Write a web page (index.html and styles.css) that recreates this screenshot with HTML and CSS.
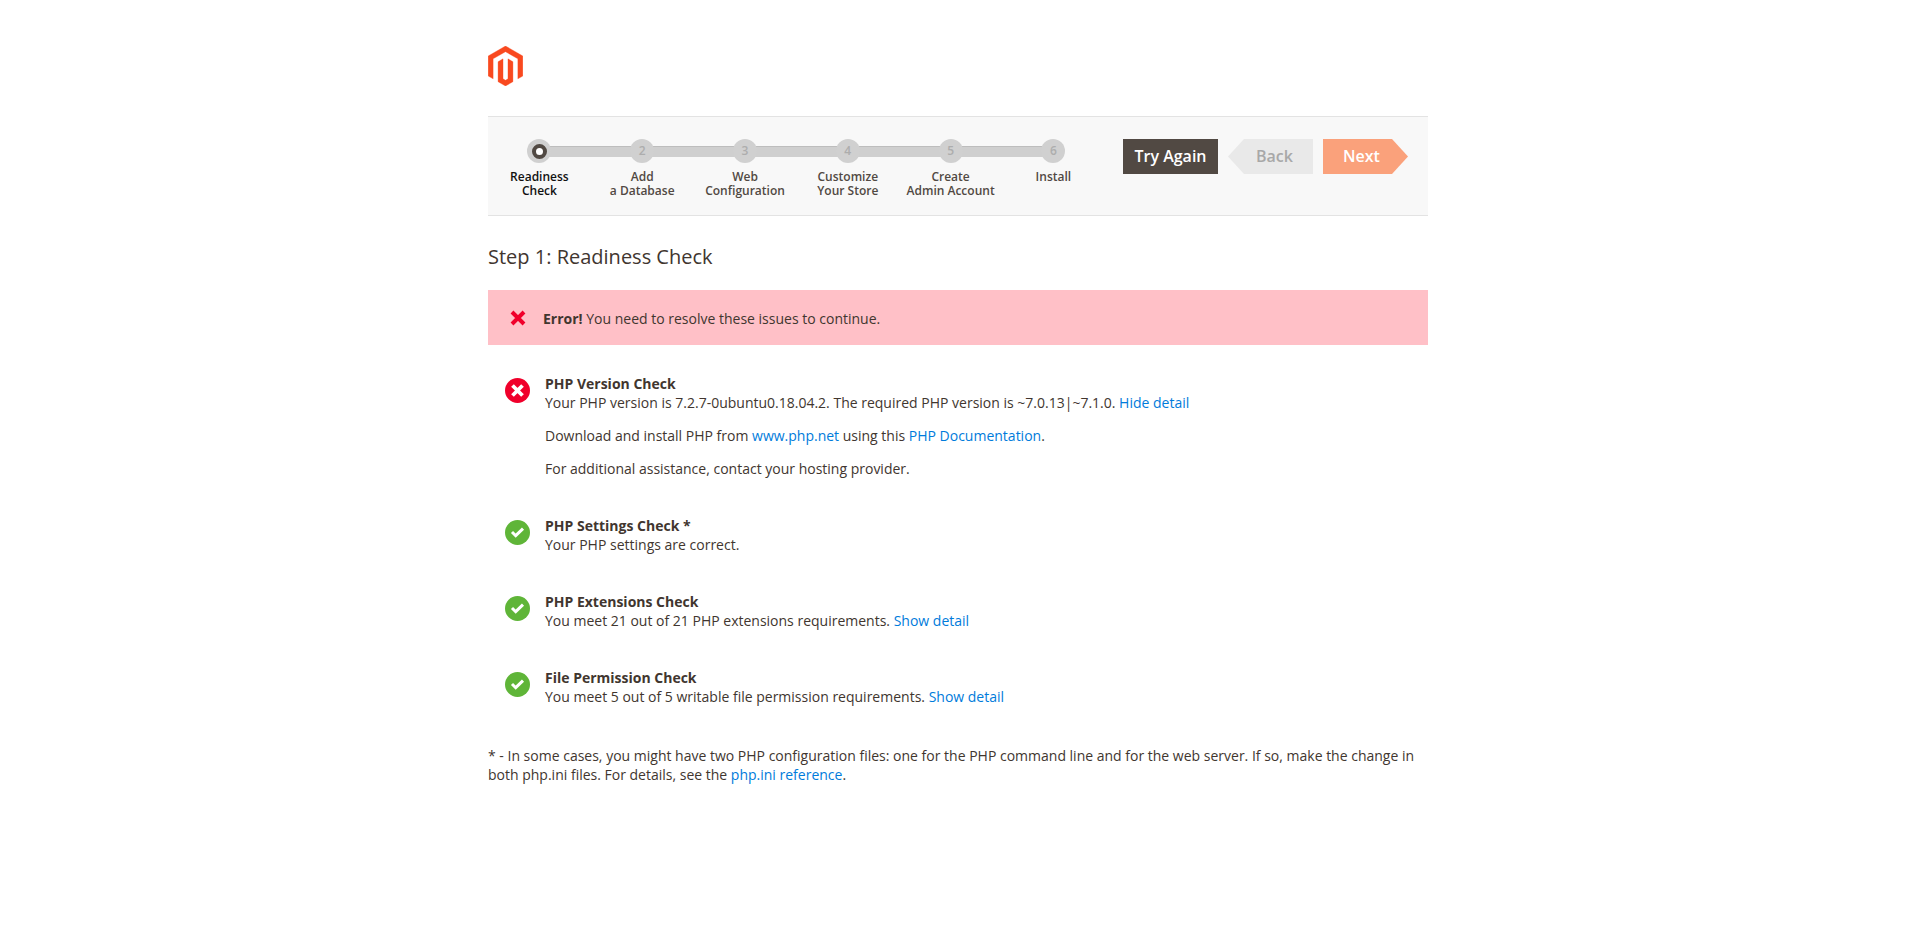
FILE: index.html
```html
<!DOCTYPE html>
<html lang="en">
<head>
<meta charset="utf-8">
<title>Magento Setup</title>
<link rel="stylesheet" href="styles.css">
</head>
<body>
<div class="page">
  <header class="logo-bar">
    <svg class="logo" viewBox="1.609 0 20.782 24" width="35" height="40" aria-label="Magento">
      <path fill="#f9491f" stroke="#f9491f" stroke-width=".2" d="M12 24l-4.455-2.572v-12l2.97-1.715v12.001L12 20.573l1.485-.859V7.713l2.97 1.715v12L12 24zM22.391 6v12l-2.969 1.714V7.713L12 3.43 4.574 7.713v12.001L1.609 18V6L12 0l10.391 6z"/>
    </svg>
  </header>

  <nav class="wizard">
    <ol class="steps">
      <li class="step active"><span class="dot"><span class="ring"></span></span><span class="label">Readiness<br>Check</span></li>
      <li class="step"><span class="dot">2</span><span class="label">Add<br>a Database</span></li>
      <li class="step"><span class="dot">3</span><span class="label">Web<br>Configuration</span></li>
      <li class="step"><span class="dot">4</span><span class="label">Customize<br>Your Store</span></li>
      <li class="step"><span class="dot">5</span><span class="label">Create<br>Admin Account</span></li>
      <li class="step"><span class="dot">6</span><span class="label">Install</span></li>
    </ol>
    <div class="actions">
      <button class="btn btn-dark" type="button">Try Again</button>
      <button class="btn btn-back" type="button">Back</button>
      <button class="btn btn-next" type="button">Next</button>
    </div>
  </nav>

  <h1 class="title">Step 1: Readiness Check</h1>

  <div class="alert">
    <svg class="alert-x" viewBox="0 0 16 16" width="16" height="16"><path fill="none" stroke="#f0002b" stroke-width="4" d="M2 2 14 14M14 2 2 14"/></svg>
    <p><strong>Error!</strong> You need to resolve these issues to continue.</p>
  </div>

  <section class="check first">
    <svg class="status" viewBox="0 0 25 25" width="25" height="25"><circle cx="12.5" cy="12.5" r="12.5" fill="#f0002b"/><path fill="none" stroke="#fff" stroke-width="3.8" d="m7.5 7.5 10 10m0-10-10 10"/></svg>
    <div class="body">
      <h2>PHP Version Check</h2>
      <p>Your PHP version is 7.2.7-0ubuntu0.18.04.2. The required PHP version is ~7.0.13|~7.1.0. <a href="#">Hide detail</a></p>
      <p class="more">Download and install PHP from <a href="#">www.php.net</a> using this <a href="#">PHP Documentation</a>.</p>
      <p class="more">For additional assistance, contact your hosting provider.</p>
    </div>
  </section>

  <section class="check">
    <svg class="status" viewBox="0 0 25 25" width="25" height="25"><circle cx="12.5" cy="12.5" r="12.5" fill="#5fb538"/><path fill="none" stroke="#fff" stroke-width="3" d="m7 12 3.7 3.7 7.3-7"/></svg>
    <div class="body">
      <h2>PHP Settings Check *</h2>
      <p>Your PHP settings are correct.</p>
    </div>
  </section>

  <section class="check">
    <svg class="status" viewBox="0 0 25 25" width="25" height="25"><circle cx="12.5" cy="12.5" r="12.5" fill="#5fb538"/><path fill="none" stroke="#fff" stroke-width="3" d="m7 12 3.7 3.7 7.3-7"/></svg>
    <div class="body">
      <h2>PHP Extensions Check</h2>
      <p>You meet 21 out of 21 PHP extensions requirements. <a href="#">Show detail</a></p>
    </div>
  </section>

  <section class="check">
    <svg class="status" viewBox="0 0 25 25" width="25" height="25"><circle cx="12.5" cy="12.5" r="12.5" fill="#5fb538"/><path fill="none" stroke="#fff" stroke-width="3" d="m7 12 3.7 3.7 7.3-7"/></svg>
    <div class="body">
      <h2>File Permission Check</h2>
      <p>You meet 5 out of 5 writable file permission requirements. <a href="#">Show detail</a></p>
    </div>
  </section>

  <p class="note">* - In some cases, you might have two PHP configuration files: one for the PHP command line and for the web server. If so, make the change in both php.ini files. For details, see the <a href="#">php.ini reference</a>.</p>
</div>
</body>
</html>
```
FILE: styles.css
```css
* { box-sizing: border-box; }
html, body { margin: 0; background: #fff; }
body {
  padding-right: 2px;
  font-family: "Open Sans", sans-serif;
  font-size: 14px;
  line-height: 19px;
  color: #41362f;
}
p, h1, h2, ol { margin: 0; padding: 0; }
a { color: #007bdb; text-decoration: none; }

.page { width: 940px; margin: 0 auto; }

.logo-bar { height: 116px; padding-top: 46px; }
.logo { display: block; }

.wizard {
  display: flex;
  height: 100px;
  background: #f8f8f8;
  border-top: 1px solid #e3e3e3;
  border-bottom: 1px solid #e3e3e3;
}
.steps {
  list-style: none;
  display: flex;
  padding-top: 22px;
  width: 635px;
}
.step {
  position: relative;
  width: 102.8px;
  flex: none;
  display: flex;
  flex-direction: column;
  align-items: center;
}
.step:not(:last-child)::after {
  content: "";
  position: absolute;
  left: 51px;
  top: 7px;
  width: 103px;
  height: 10px;
  background: #cfcfcf;
  border-top: 1px solid #bdbdbd;
}
.dot {
  position: relative;
  z-index: 1;
  width: 24px;
  height: 24px;
  border-radius: 50%;
  background: #d0d0d0;
  color: #adadad;
  font-size: 12px;
  font-weight: 600;
  line-height: 24px;
  display: flex;
  align-items: center;
  justify-content: center;
}
.ring {
  width: 15px;
  height: 15px;
  border-radius: 50%;
  border: 4px solid #514943;
  background: #fff;
}
.label {
  margin-top: 7px;
  font-size: 12px;
  line-height: 14px;
  font-weight: 600;
  text-align: center;
  white-space: nowrap;
  color: #514943;
}
.active .label { color: #111; }

.actions {
  display: flex;
  gap: 10px;
  padding-top: 22px;
}
.btn {
  width: 95px;
  height: 35px;
  border: 0;
  padding: 0;
  font: 600 16px/35px "Open Sans", sans-serif;
  text-align: center;
}
.btn-dark { background: #514943; color: #fff; }
.btn-back {
  width: 85px;
  background: #e9e9e9;
  color: #a8a8a8;
  clip-path: polygon(16px 0, 100% 0, 100% 100%, 16px 100%, 0 50%);
  padding-left: 8px;
}
.btn-next {
  width: 85px;
  background: #faa17b;
  color: #fff;
  clip-path: polygon(0 0, calc(100% - 16px) 0, 100% 50%, calc(100% - 16px) 100%, 0 100%);
  padding-right: 8px;
}

.title {
  margin-top: 27px;
  font-size: 20px;
  line-height: 27px;
  font-weight: 400;
}

.alert {
  display: flex;
  align-items: center;
  height: 55px;
  margin-top: 20px;
  background: #ffc0c7;
  padding-left: 22px;
}
.alert-x { flex: none; margin-right: 17px; }
.alert p { margin-top: 1px; }
.alert strong { font-weight: 700; }

.check {
  display: flex;
  margin-top: 38px;
  padding-left: 17px;
}
.check.first { margin-top: 29px; }
.status { flex: none; margin-top: 4px; margin-right: 15px; }
.check h2 { font-size: 14px; line-height: 19px; font-weight: 700; }
.more { margin-top: 14px; }
.note { margin-top: 40px; }
```
